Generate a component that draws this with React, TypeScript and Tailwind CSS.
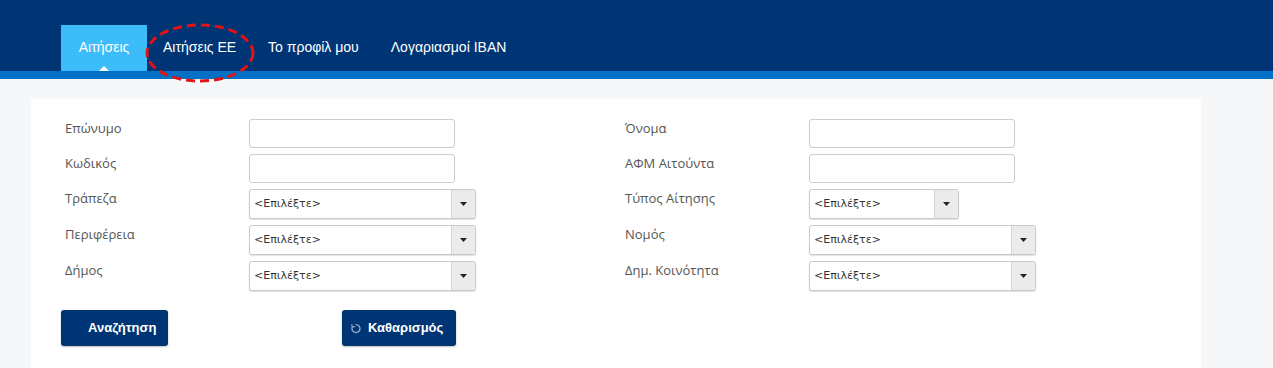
const Caret = () => (
  <svg width="7" height="4" viewBox="0 0 7 4">
    <path d="M0 0 L7 0 L3.5 4 Z" fill="#222" />
  </svg>
);

const TextInput = () => (
  <div className="h-[29px] w-[206px] rounded-[3px] border border-[#cccccc] bg-white" />
);

const Select = ({ width }: { width: string }) => (
  <div
    className={`flex h-[30px] ${width} overflow-hidden rounded-[3px] border border-[#c8c8c8] bg-white shadow-[0_1px_1px_rgba(0,0,0,0.12)]`}
  >
    <div className="flex flex-1 items-center pl-[4px] font-['DejaVu_Sans',Verdana,sans-serif] text-[11px] text-[#333]">
      &lt;Επιλέξτε&gt;
    </div>
    <div className="flex w-[24px] items-center justify-center border-l border-[#d4d4d4] bg-[#ebebeb]">
      <Caret />
    </div>
  </div>
);

const Row = ({ label, children }: { label: string; children: React.ReactNode }) => (
  <div className="flex items-start">
    <div className="w-[184px] font-['Open_Sans',sans-serif] text-[13px] leading-[18px] text-[#555]">{label}</div>
    {children}
  </div>
);

const Spinner = () => (
  <svg width="10" height="11" viewBox="0 0 10 11" fill="none">
    <path d="M5 1.6 A4 4 0 1 1 1.3 4" stroke="#93a6c6" strokeWidth="1.4" strokeLinecap="round" />
    <path d="M0.8 1.5 L1.3 4.1 L3.8 3.5" stroke="#93a6c6" strokeWidth="1.2" strokeLinecap="round" strokeLinejoin="round" />
  </svg>
);

export default function App() {
  const tabs = ['Αιτήσεις ΕΕ', 'Το προφίλ μου', 'Λογαριασμοί IBAN'];
  return (
    <div className="min-h-[368px] bg-[#f6f7f9] font-['Liberation_Sans',Arial,sans-serif]">
      <div className="relative h-[71px] bg-[#003575]">
        <nav className="flex h-full items-end pl-[61px] text-[14px] text-white">
          <div className="relative flex h-[46px] w-[86px] items-center justify-center bg-[#3dbcfa] pb-[1px]">
            Αιτήσεις
            <span className="absolute bottom-0 left-1/2 -ml-[5px] h-0 w-0 border-x-[5px] border-b-[5px] border-x-transparent border-b-white" />
          </div>
          {tabs.map((t) => (
            <div key={t} className="flex h-[46px] items-center px-[16px] pb-[1px]">
              {t}
            </div>
          ))}
        </nav>
        <svg className="absolute left-[143px] top-[21px]" width="116" height="64" viewBox="0 0 116 64">
          <ellipse
            cx="57"
            cy="32"
            rx="53"
            ry="28"
            fill="none"
            stroke="#e41313"
            strokeWidth="3"
            strokeDasharray="9 5"
          />
        </svg>
      </div>
      <div className="h-[8px] bg-[#0170c5]" />
      <div className="px-[31px] pt-[20px]">
        <div className="h-[269px] w-[1170px] bg-white pt-[20px]">
          <div className="flex">
            <div className="flex w-[560px] flex-col gap-[6px] pl-[34px]">
              <Row label="Επώνυμο"><TextInput /></Row>
              <Row label="Κωδικός"><TextInput /></Row>
              <Row label="Τράπεζα"><Select width="w-[227px]" /></Row>
              <Row label="Περιφέρεια"><Select width="w-[227px]" /></Row>
              <Row label="Δήμος"><Select width="w-[227px]" /></Row>
            </div>
            <div className="flex w-[560px] flex-col gap-[6px] pl-[34px]">
              <Row label="Όνομα"><TextInput /></Row>
              <Row label="ΑΦΜ Αιτούντα"><TextInput /></Row>
              <Row label="Τύπος Αίτησης"><Select width="w-[150px]" /></Row>
              <Row label="Νομός"><Select width="w-[227px]" /></Row>
              <Row label="Δημ. Κοινότητα"><Select width="w-[227px]" /></Row>
            </div>
          </div>
          <div className="mt-[19px] flex pl-[30px]">
            <button className="h-[36px] w-[107px] rounded-[3px] bg-[#003575] pl-[27px] text-left text-[13px] font-bold text-white shadow-[0_1px_2px_rgba(0,0,0,0.25)]">
              Αναζήτηση
            </button>
            <button className="ml-[174px] flex h-[36px] w-[114px] items-center gap-[7px] rounded-[3px] bg-[#003575] pl-[9px] text-[13px] font-bold text-white shadow-[0_1px_2px_rgba(0,0,0,0.25)]">
              <Spinner />
              Καθαρισμός
            </button>
          </div>
        </div>
      </div>
    </div>
  );
}
